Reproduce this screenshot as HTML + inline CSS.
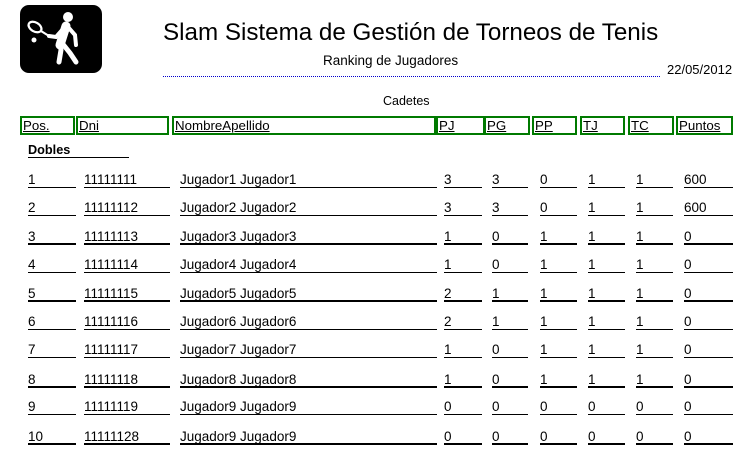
<!DOCTYPE html>
<html><head><meta charset="utf-8"><style>
body{margin:0;width:745px;height:454px;background:#fff;position:relative;overflow:hidden;font-family:"Liberation Sans",Arial,sans-serif;color:#000}
.a{position:absolute;white-space:nowrap}
.h{position:absolute;top:116px;height:15px;border:2px solid #007a00;font-size:13.3px;line-height:16px;padding-left:1px;text-decoration:underline;color:#000}
.r{position:absolute;left:0;width:745px;height:16px}
.r div{position:absolute;top:0;height:15px;font-size:13.5px;line-height:15px;border-bottom:1px solid #000}
.r.t div{border-bottom-width:2px;height:14px}
.c1{left:28px;width:48px}.c2{left:84px;width:86px}.c3{left:180px;width:257px}
.c4{left:444px;width:38px}.c5{left:492px;width:36px}.c6{left:540px;width:37px}
.c7{left:588px;width:37px}.c8{left:636px;width:37px}.c9{left:684px;width:49px}
</style></head><body>
<div class="a" style="left:20px;top:5px;width:82px;height:68px;background:#000;border-radius:9px">
<svg width="82" height="68" viewBox="0 0 82 68">
<circle cx="48" cy="12" r="5" fill="#fff"/>
<path d="M46 21 L40 40" stroke="#fff" stroke-width="9" stroke-linecap="round"/>
<path d="M40 38 L41 45 L39 57" stroke="#fff" stroke-width="5" stroke-linecap="round" stroke-linejoin="round" fill="none"/>
<path d="M42 38 L50 48 L56 57" stroke="#fff" stroke-width="5" stroke-linecap="round" stroke-linejoin="round" fill="none"/>
<path d="M48 22 L55 30 L56 40" stroke="#fff" stroke-width="4" stroke-linecap="round" fill="none"/>
<path d="M43 24 L36 32 L29 31" stroke="#fff" stroke-width="4" stroke-linecap="round" fill="none"/>
<ellipse cx="15" cy="22" rx="7" ry="4.5" fill="none" stroke="#fff" stroke-width="2.2" transform="rotate(30 15 22)"/>
<path d="M21 26 L29 31" stroke="#fff" stroke-width="2.2"/>
<circle cx="14" cy="35" r="2.5" fill="#fff"/>
</svg></div>
<div class="a" style="left:163px;top:19px;font-size:24.2px">Slam Sistema de Gestión de Torneos de Tenis</div>
<div class="a" style="left:323px;top:53px;font-size:13.5px">Ranking de Jugadores</div>
<div class="a" style="left:163px;top:76px;width:497px;border-top:1px dotted #00c"></div>
<div class="a" style="left:667px;top:62px;font-size:13px">22/05/2012</div>
<div class="a" style="left:383px;top:94px;font-size:12.5px">Cadetes</div>
<div class="h" style="left:20px;width:50px">Pos.</div>
<div class="h" style="left:76px;width:88px">Dni</div>
<div class="h" style="left:172px;width:259px">NombreApellido</div>
<div class="h" style="left:434px;width:44px;border-left-width:4px">PJ</div>
<div class="h" style="left:484px;width:41px">PG</div>
<div class="h" style="left:532px;width:40px">PP</div>
<div class="h" style="left:580px;width:40px">TJ</div>
<div class="h" style="left:628px;width:41px">TC</div>
<div class="h" style="left:676px;width:52px">Puntos</div>
<div class="a" style="left:28px;top:143px;width:101px;height:14px;font-size:12.7px;font-weight:bold;border-bottom:1px solid #000">Dobles</div>
<div class="r" style="top:172px"><div class="c1">1</div><div class="c2">11111111</div><div class="c3">Jugador1 Jugador1</div><div class="c4">3</div><div class="c5">3</div><div class="c6">0</div><div class="c7">1</div><div class="c8">1</div><div class="c9">600</div></div>
<div class="r" style="top:200px"><div class="c1">2</div><div class="c2">11111112</div><div class="c3">Jugador2 Jugador2</div><div class="c4">3</div><div class="c5">3</div><div class="c6">0</div><div class="c7">1</div><div class="c8">1</div><div class="c9">600</div></div>
<div class="r t" style="top:229px"><div class="c1">3</div><div class="c2">11111113</div><div class="c3">Jugador3 Jugador3</div><div class="c4">1</div><div class="c5">0</div><div class="c6">1</div><div class="c7">1</div><div class="c8">1</div><div class="c9">0</div></div>
<div class="r" style="top:257px"><div class="c1">4</div><div class="c2">11111114</div><div class="c3">Jugador4 Jugador4</div><div class="c4">1</div><div class="c5">0</div><div class="c6">1</div><div class="c7">1</div><div class="c8">1</div><div class="c9">0</div></div>
<div class="r t" style="top:286px"><div class="c1">5</div><div class="c2">11111115</div><div class="c3">Jugador5 Jugador5</div><div class="c4">2</div><div class="c5">1</div><div class="c6">1</div><div class="c7">1</div><div class="c8">1</div><div class="c9">0</div></div>
<div class="r" style="top:314px"><div class="c1">6</div><div class="c2">11111116</div><div class="c3">Jugador6 Jugador6</div><div class="c4">2</div><div class="c5">1</div><div class="c6">1</div><div class="c7">1</div><div class="c8">1</div><div class="c9">0</div></div>
<div class="r" style="top:342px"><div class="c1">7</div><div class="c2">11111117</div><div class="c3">Jugador7 Jugador7</div><div class="c4">1</div><div class="c5">0</div><div class="c6">1</div><div class="c7">1</div><div class="c8">1</div><div class="c9">0</div></div>
<div class="r t" style="top:372px"><div class="c1">8</div><div class="c2">11111118</div><div class="c3">Jugador8 Jugador8</div><div class="c4">1</div><div class="c5">0</div><div class="c6">1</div><div class="c7">1</div><div class="c8">1</div><div class="c9">0</div></div>
<div class="r" style="top:399px"><div class="c1">9</div><div class="c2">11111119</div><div class="c3">Jugador9 Jugador9</div><div class="c4">0</div><div class="c5">0</div><div class="c6">0</div><div class="c7">0</div><div class="c8">0</div><div class="c9">0</div></div>
<div class="r t" style="top:429px"><div class="c1">10</div><div class="c2">11111128</div><div class="c3">Jugador9 Jugador9</div><div class="c4">0</div><div class="c5">0</div><div class="c6">0</div><div class="c7">0</div><div class="c8">0</div><div class="c9">0</div></div>
</body></html>
